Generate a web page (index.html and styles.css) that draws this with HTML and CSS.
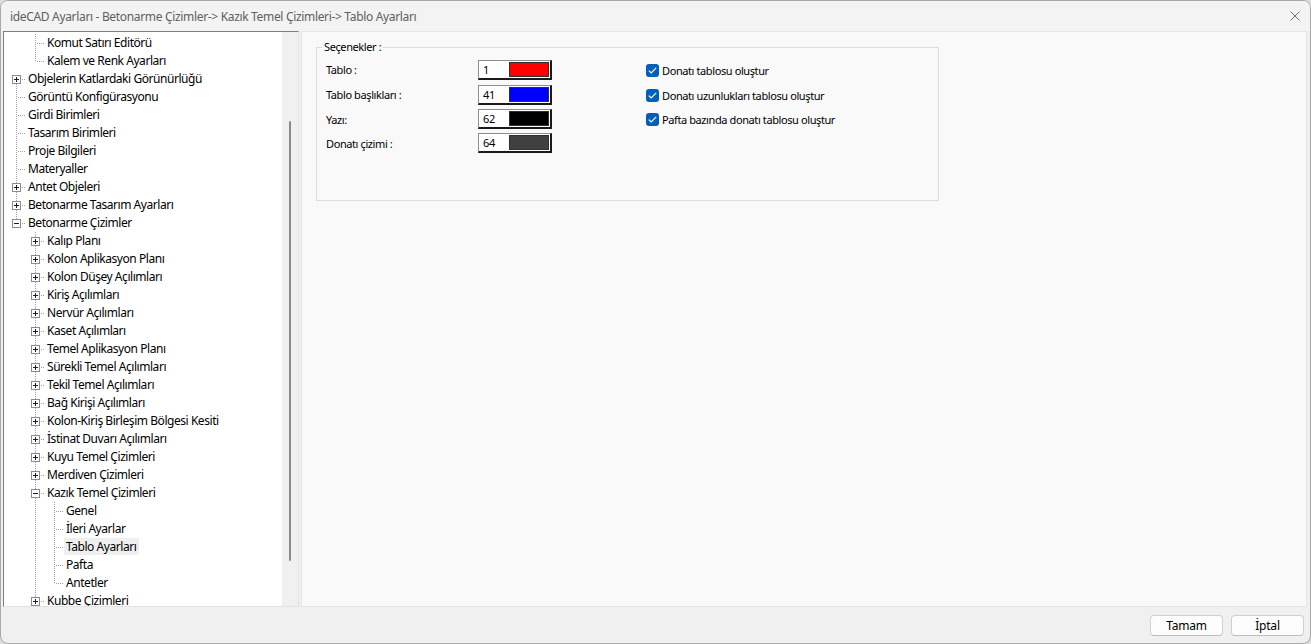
FILE: index.html
```html
<!DOCTYPE html>
<html lang="tr">
<head>
<meta charset="utf-8">
<title>ideCAD Ayarları</title>
<link rel="stylesheet" href="styles.css">
</head>
<body>
<div class="window">
  <div class="titlebar">
    <span class="title">ideCAD Ayarları - Betonarme Çizimler-&gt; Kazık Temel Çizimleri-&gt; Tablo Ayarları</span>
    <svg class="close" width="10" height="10" viewBox="0 0 10 10"><path d="M0.5 0.5L9.5 9.5M9.5 0.5L0.5 9.5" stroke="#6e6e6e" stroke-width="1" fill="none"/></svg>
  </div>
  <div class="main">
    <div class="tree">
      <div class="list">
        <div class="row"><span class="g"></span><span class="g t"></span><span class="txt">Komut Satırı Editörü</span></div>
        <div class="row"><span class="g"></span><span class="g l"></span><span class="txt">Kalem ve Renk Ayarları</span></div>
        <div class="row"><span class="g f"><svg class="exp" width="9" height="9" viewBox="0 0 9 9"><rect x="0.5" y="0.5" width="8" height="8" fill="#fff" stroke="#8c8c8c"/><path d="M2 4.5H7M4.5 2V7" stroke="#1a1a3a"/></svg></span><span class="txt">Objelerin Katlardaki Görünürlüğü</span></div>
        <div class="row"><span class="g t"></span><span class="txt">Görüntü Konfigürasyonu</span></div>
        <div class="row"><span class="g t"></span><span class="txt">Girdi Birimleri</span></div>
        <div class="row"><span class="g t"></span><span class="txt">Tasarım Birimleri</span></div>
        <div class="row"><span class="g t"></span><span class="txt">Proje Bilgileri</span></div>
        <div class="row"><span class="g t"></span><span class="txt">Materyaller</span></div>
        <div class="row"><span class="g t"><svg class="exp" width="9" height="9" viewBox="0 0 9 9"><rect x="0.5" y="0.5" width="8" height="8" fill="#fff" stroke="#8c8c8c"/><path d="M2 4.5H7M4.5 2V7" stroke="#1a1a3a"/></svg></span><span class="txt">Antet Objeleri</span></div>
        <div class="row"><span class="g t"><svg class="exp" width="9" height="9" viewBox="0 0 9 9"><rect x="0.5" y="0.5" width="8" height="8" fill="#fff" stroke="#8c8c8c"/><path d="M2 4.5H7M4.5 2V7" stroke="#1a1a3a"/></svg></span><span class="txt">Betonarme Tasarım Ayarları</span></div>
        <div class="row"><span class="g l"><svg class="exp" width="9" height="9" viewBox="0 0 9 9"><rect x="0.5" y="0.5" width="8" height="8" fill="#fff" stroke="#8c8c8c"/><path d="M2 4.5H7" stroke="#1a1a3a"/></svg></span><span class="txt">Betonarme Çizimler</span></div>
        <div class="row"><span class="g"></span><span class="g t"><svg class="exp" width="9" height="9" viewBox="0 0 9 9"><rect x="0.5" y="0.5" width="8" height="8" fill="#fff" stroke="#8c8c8c"/><path d="M2 4.5H7M4.5 2V7" stroke="#1a1a3a"/></svg></span><span class="txt">Kalıp Planı</span></div>
        <div class="row"><span class="g"></span><span class="g t"><svg class="exp" width="9" height="9" viewBox="0 0 9 9"><rect x="0.5" y="0.5" width="8" height="8" fill="#fff" stroke="#8c8c8c"/><path d="M2 4.5H7M4.5 2V7" stroke="#1a1a3a"/></svg></span><span class="txt">Kolon Aplikasyon Planı</span></div>
        <div class="row"><span class="g"></span><span class="g t"><svg class="exp" width="9" height="9" viewBox="0 0 9 9"><rect x="0.5" y="0.5" width="8" height="8" fill="#fff" stroke="#8c8c8c"/><path d="M2 4.5H7M4.5 2V7" stroke="#1a1a3a"/></svg></span><span class="txt">Kolon Düşey Açılımları</span></div>
        <div class="row"><span class="g"></span><span class="g t"><svg class="exp" width="9" height="9" viewBox="0 0 9 9"><rect x="0.5" y="0.5" width="8" height="8" fill="#fff" stroke="#8c8c8c"/><path d="M2 4.5H7M4.5 2V7" stroke="#1a1a3a"/></svg></span><span class="txt">Kiriş Açılımları</span></div>
        <div class="row"><span class="g"></span><span class="g t"><svg class="exp" width="9" height="9" viewBox="0 0 9 9"><rect x="0.5" y="0.5" width="8" height="8" fill="#fff" stroke="#8c8c8c"/><path d="M2 4.5H7M4.5 2V7" stroke="#1a1a3a"/></svg></span><span class="txt">Nervür Açılımları</span></div>
        <div class="row"><span class="g"></span><span class="g t"><svg class="exp" width="9" height="9" viewBox="0 0 9 9"><rect x="0.5" y="0.5" width="8" height="8" fill="#fff" stroke="#8c8c8c"/><path d="M2 4.5H7M4.5 2V7" stroke="#1a1a3a"/></svg></span><span class="txt">Kaset Açılımları</span></div>
        <div class="row"><span class="g"></span><span class="g t"><svg class="exp" width="9" height="9" viewBox="0 0 9 9"><rect x="0.5" y="0.5" width="8" height="8" fill="#fff" stroke="#8c8c8c"/><path d="M2 4.5H7M4.5 2V7" stroke="#1a1a3a"/></svg></span><span class="txt">Temel Aplikasyon Planı</span></div>
        <div class="row"><span class="g"></span><span class="g t"><svg class="exp" width="9" height="9" viewBox="0 0 9 9"><rect x="0.5" y="0.5" width="8" height="8" fill="#fff" stroke="#8c8c8c"/><path d="M2 4.5H7M4.5 2V7" stroke="#1a1a3a"/></svg></span><span class="txt">Sürekli Temel Açılımları</span></div>
        <div class="row"><span class="g"></span><span class="g t"><svg class="exp" width="9" height="9" viewBox="0 0 9 9"><rect x="0.5" y="0.5" width="8" height="8" fill="#fff" stroke="#8c8c8c"/><path d="M2 4.5H7M4.5 2V7" stroke="#1a1a3a"/></svg></span><span class="txt">Tekil Temel Açılımları</span></div>
        <div class="row"><span class="g"></span><span class="g t"><svg class="exp" width="9" height="9" viewBox="0 0 9 9"><rect x="0.5" y="0.5" width="8" height="8" fill="#fff" stroke="#8c8c8c"/><path d="M2 4.5H7M4.5 2V7" stroke="#1a1a3a"/></svg></span><span class="txt">Bağ Kirişi Açılımları</span></div>
        <div class="row"><span class="g"></span><span class="g t"><svg class="exp" width="9" height="9" viewBox="0 0 9 9"><rect x="0.5" y="0.5" width="8" height="8" fill="#fff" stroke="#8c8c8c"/><path d="M2 4.5H7M4.5 2V7" stroke="#1a1a3a"/></svg></span><span class="txt">Kolon-Kiriş Birleşim Bölgesi Kesiti</span></div>
        <div class="row"><span class="g"></span><span class="g t"><svg class="exp" width="9" height="9" viewBox="0 0 9 9"><rect x="0.5" y="0.5" width="8" height="8" fill="#fff" stroke="#8c8c8c"/><path d="M2 4.5H7M4.5 2V7" stroke="#1a1a3a"/></svg></span><span class="txt">İstinat Duvarı Açılımları</span></div>
        <div class="row"><span class="g"></span><span class="g t"><svg class="exp" width="9" height="9" viewBox="0 0 9 9"><rect x="0.5" y="0.5" width="8" height="8" fill="#fff" stroke="#8c8c8c"/><path d="M2 4.5H7M4.5 2V7" stroke="#1a1a3a"/></svg></span><span class="txt">Kuyu Temel Çizimleri</span></div>
        <div class="row"><span class="g"></span><span class="g t"><svg class="exp" width="9" height="9" viewBox="0 0 9 9"><rect x="0.5" y="0.5" width="8" height="8" fill="#fff" stroke="#8c8c8c"/><path d="M2 4.5H7M4.5 2V7" stroke="#1a1a3a"/></svg></span><span class="txt">Merdiven Çizimleri</span></div>
        <div class="row"><span class="g"></span><span class="g t"><svg class="exp" width="9" height="9" viewBox="0 0 9 9"><rect x="0.5" y="0.5" width="8" height="8" fill="#fff" stroke="#8c8c8c"/><path d="M2 4.5H7" stroke="#1a1a3a"/></svg></span><span class="txt">Kazık Temel Çizimleri</span></div>
        <div class="row"><span class="g"></span><span class="g v"></span><span class="g t"></span><span class="txt">Genel</span></div>
        <div class="row"><span class="g"></span><span class="g v"></span><span class="g t"></span><span class="txt">İleri Ayarlar</span></div>
        <div class="row"><span class="g"></span><span class="g v"></span><span class="g t"></span><span class="txt sel">Tablo Ayarları</span></div>
        <div class="row"><span class="g"></span><span class="g v"></span><span class="g t"></span><span class="txt">Pafta</span></div>
        <div class="row"><span class="g"></span><span class="g v"></span><span class="g l"></span><span class="txt">Antetler</span></div>
        <div class="row"><span class="g"></span><span class="g t"><svg class="exp" width="9" height="9" viewBox="0 0 9 9"><rect x="0.5" y="0.5" width="8" height="8" fill="#fff" stroke="#8c8c8c"/><path d="M2 4.5H7M4.5 2V7" stroke="#1a1a3a"/></svg></span><span class="txt">Kubbe Çizimleri</span></div>
      </div>
      <div class="scrollbar"><div class="thumb"></div></div>
    </div>
    <div class="panel">
      <fieldset class="group">
        <legend class="legend">Seçenekler :</legend>
        <div class="grid">
          <span class="lbl">Tablo :</span>
          <div class="color-box"><span class="num">1</span><span class="swatch red"></span></div>
          <label class="check"><span class="cb"><svg width="9" height="7" viewBox="0 0 9 7"><path d="M0.8 3.6L3.2 5.9L8.2 0.9" stroke="#fff" stroke-width="1.2" fill="none"/></svg></span>Donatı tablosu oluştur</label>

          <span class="lbl">Tablo başlıkları :</span>
          <div class="color-box"><span class="num">41</span><span class="swatch blue"></span></div>
          <label class="check"><span class="cb"><svg width="9" height="7" viewBox="0 0 9 7"><path d="M0.8 3.6L3.2 5.9L8.2 0.9" stroke="#fff" stroke-width="1.2" fill="none"/></svg></span>Donatı uzunlukları tablosu oluştur</label>

          <span class="lbl">Yazı:</span>
          <div class="color-box"><span class="num">62</span><span class="swatch black"></span></div>
          <label class="check"><span class="cb"><svg width="9" height="7" viewBox="0 0 9 7"><path d="M0.8 3.6L3.2 5.9L8.2 0.9" stroke="#fff" stroke-width="1.2" fill="none"/></svg></span>Pafta bazında donatı tablosu oluştur</label>

          <span class="lbl">Donatı çizimi :</span>
          <div class="color-box"><span class="num">64</span><span class="swatch gray"></span></div>
          <span></span>
        </div>
      </fieldset>
    </div>
  </div>
  <div class="footer">
    <button class="btn">Tamam</button>
    <button class="btn">İptal</button>
  </div>
</div>
</body>
</html>
```

FILE: styles.css
```css
* { box-sizing: border-box; }
html, body { margin: 0; padding: 0; }
body {
  width: 1311px;
  height: 644px;
  background: #dcdcdc;
  font-family: "Noto Sans", "DejaVu Sans", sans-serif;
  overflow: hidden;
}
.window {
  width: 1311px;
  height: 644px;
  border: 1px solid #a9a9a9;
  border-radius: 8px;
  background: #f0f0f0;
  display: flex;
  flex-direction: column;
  overflow: hidden;
}
.titlebar {
  height: 30px;
  flex: none;
  display: flex;
  align-items: center;
  justify-content: space-between;
  padding: 0 10px 0 9px;
  background: #f3f3f3;
}
.title {
  font-size: 12px;
  letter-spacing: -0.33px;
  color: #616161;
  white-space: nowrap;
}
.close { display: block; margin-right: 0; }

.main {
  flex: none;
  height: 576px;
  display: flex;
  padding: 0 2px 0 2px;
  gap: 2px;
}
.tree {
  width: 296px;
  flex: none;
  display: flex;
  border-top: 1px solid #7f7f7f;
  border-left: 1px solid #7f7f7f;
  border-right: 1px solid #e3e3e3;
  border-bottom: 1px solid #e3e3e3;
  background: #fff;
}
.list {
  flex: 1;
  padding: 2px 0 0 3px;
  overflow: hidden;
  font-size: 12px;
  letter-spacing: -0.45px;
  color: #000;
}
.row {
  height: 18px;
  display: flex;
  align-items: stretch;
  white-space: nowrap;
}
.g {
  width: 19px;
  height: 18px;
  flex: none;
  display: block;
}
.v {
  background: repeating-linear-gradient(to bottom, #a0a0a0 0 1px, transparent 1px 2px) 9px 0 / 1px 18px no-repeat;
}
.t {
  background:
    repeating-linear-gradient(to bottom, #a0a0a0 0 1px, transparent 1px 2px) 9px 0 / 1px 18px no-repeat,
    repeating-linear-gradient(to right, #a0a0a0 0 1px, transparent 1px 2px) 11px 9px / 8px 1px no-repeat;
}
.l {
  background:
    repeating-linear-gradient(to bottom, #a0a0a0 0 1px, transparent 1px 2px) 9px 0 / 1px 10px no-repeat,
    repeating-linear-gradient(to right, #a0a0a0 0 1px, transparent 1px 2px) 11px 9px / 8px 1px no-repeat;
}
.f {
  background:
    repeating-linear-gradient(to bottom, #a0a0a0 0 1px, transparent 1px 2px) 9px 10px / 1px 8px no-repeat,
    repeating-linear-gradient(to right, #a0a0a0 0 1px, transparent 1px 2px) 11px 9px / 8px 1px no-repeat;
}
.exp {
  display: block;
  margin: 5px 0 0 5px;
}
.txt {
  display: block;
  padding: 0 3px 0 2px;
  height: 17px;
  line-height: 17px;
  margin-top: 0;
}
.sel { background: #efefef; }

.scrollbar {
  width: 16px;
  flex: none;
  background: #f0f0f0;
  padding: 89px 0 0 7px;
}
.thumb {
  width: 2px;
  height: 440px;
  background: #8a8a8a;
  border-radius: 1px;
}

.panel {
  width: 1006px;
  flex: none;
  background: #f9f9f9;
  border: 1px solid #e5e5e5;
  padding: 7px 0 0 14px;
}
.group {
  margin: 0;
  width: 623px;
  height: 162px;
  border: 1px solid #dcdcdc;
  padding: 0 0 0 5px;
  font-size: 11px;
  letter-spacing: -0.4px;
  color: #000;
}
.legend {
  padding: 0 2px;
  line-height: 16px;
  height: 16px;
}
.grid {
  display: grid;
  grid-template-columns: 152px 74px 94px auto;
  grid-template-rows: 25px 25px 24px 24px;
  align-items: center;
  margin: 2px 0 0 4px;
}
.grid > :nth-child(3n) { grid-column: 4; }
.lbl { line-height: 14px; padding-top: 1px; }
.color-box {
  width: 74px;
  height: 20px;
  display: flex;
  background: #fff;
  border-style: solid;
  border-width: 1px 2px 2px 1px;
  border-color: #8f8f8f #1a1a1a #1a1a1a #8f8f8f;
  padding: 1px 1px 1px 1px;
}
.num {
  width: 29px;
  flex: none;
  padding-left: 3px;
  line-height: 15px;
  font-size: 11px;
}
.swatch {
  flex: 1;
  border: 1px solid #303030;
}
.red { background: #ff0000; }
.blue { background: #0000ff; }
.black { background: #000000; }
.gray { background: #404040; }

.check {
  display: flex;
  align-items: center;
  gap: 3px;
  white-space: nowrap;
  padding-top: 1px;
}
.cb {
  width: 13px;
  height: 13px;
  border-radius: 3px;
  background: #005fb8;
  display: flex;
  align-items: center;
  justify-content: center;
}
.cb svg { display: block; }

.footer {
  flex: 1;
  display: flex;
  justify-content: flex-end;
  align-items: flex-start;
  gap: 8px;
  padding: 8px 6px 0 0;
}
.btn {
  width: 73px;
  height: 21px;
  border: 1px solid #d0d0d0;
  border-bottom-color: #bcbcbc;
  border-radius: 4px;
  background: #fdfdfd;
  font-family: "Noto Sans", "DejaVu Sans", sans-serif;
  font-size: 12px;
  letter-spacing: -0.2px;
  color: #000;
  padding: 0;
  line-height: 18px;
}
```
